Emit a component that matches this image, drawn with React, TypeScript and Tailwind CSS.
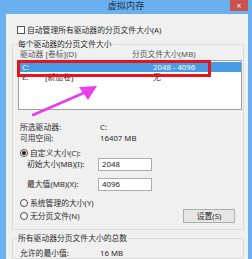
import React from 'react';

const font = { fontFamily: '"Noto Sans", "Noto Sans CJK SC", sans-serif' };

function Radio({ checked }: { checked?: boolean }) {
  return (
    <span className="w-[8px] h-[8px] rounded-full border border-[#4a4a4a] bg-white flex items-center justify-center shrink-0">
      {checked && <span className="w-[4px] h-[4px] rounded-full bg-[#1a1a1a]" />}
    </span>
  );
}

function SizeInput({ value }: { value: string }) {
  return (
    <div className="w-[54px] h-[13px] border border-[#acacac] bg-white pl-[3px] text-[7.8px] leading-[11px] text-[#222]">
      {value}
    </div>
  );
}

export default function App() {
  return (
    <div className="relative w-[252px] h-[259px] overflow-hidden bg-[#6aaff0] flex flex-col text-[#2b2b2b]" style={font}>
      {/* title bar */}
      <div className="h-[17px] relative flex items-center justify-center">
        <span className="text-[9.2px] leading-[12px] text-[#1d3550] -mt-[3px]">虚拟内存</span>
        <div className="absolute right-[4px] top-0 w-[18px] h-[11px] bg-[#c9524c] flex items-center justify-center text-white text-[8px] leading-[8px]">
          ×
        </div>
      </div>

      {/* body */}
      <div className="flex-1 ml-[6px] mr-[4px] bg-[#f0f0f0] flex flex-col pt-[11px]">
        <div className="flex items-center gap-[2px] pl-[11px] h-[10px] text-[7.8px] leading-[10px]">
          <span className="w-[8px] h-[8px] border border-[#555] bg-white shrink-0" />
          <span>自动管理所有驱动器的分页文件大小(A)</span>
        </div>

        <fieldset className="mt-[4px] ml-[6px] mr-[4px] border border-[#dcdcdc] pb-[6px]">
          <legend className="ml-[4px] px-[1px] text-[7.8px] leading-[10px]">每个驱动器的分页文件大小</legend>

          <div className="flex h-[10px] text-[7.8px] leading-[10px] text-[#555]">
            <span className="pl-[7px] w-[119px]">驱动器 [卷标](D)</span>
            <span>分页文件大小(MB)</span>
          </div>

          <div className="ml-[5px] mr-[1px] mt-[1px] h-[50px] border border-[#a0a0a0] bg-white pt-[1px] text-[7.8px] leading-[10px]">
            <div className="flex h-[10px] bg-[#4a9be6] text-white">
              <span className="pl-[3px] w-[26px]">C:</span>
              <span className="w-[108px]"></span>
              <span>2048 - 4096</span>
            </div>
            <div className="flex h-[10px]">
              <span className="pl-[3px] w-[26px]">E:</span>
              <span className="w-[108px]">[新加卷]</span>
              <span>无</span>
            </div>
          </div>

          <div className="mt-[12px] flex flex-col text-[7.8px] leading-[11px]">
            <div className="flex h-[11px] pl-[7px]">
              <span className="w-[80px]">所选驱动器:</span>
              <span>C:</span>
            </div>
            <div className="flex h-[11px] pl-[7px]">
              <span className="w-[80px]">可用空间:</span>
              <span>16407 MB</span>
            </div>

            <div className="flex items-center gap-[2px] h-[10px] pl-[7px] mt-[4px]">
              <Radio checked />
              <span>自定义大小(C):</span>
            </div>
            <div className="flex items-center h-[13px] pl-[14px]">
              <span className="w-[71px]">初始大小(MB)(I):</span>
              <SizeInput value="2048" />
            </div>
            <div className="flex items-center h-[14px] pl-[14px] mt-[6px]">
              <span className="w-[71px]">最大值(MB)(X):</span>
              <SizeInput value="4096" />
            </div>

            <div className="flex items-center gap-[2px] h-[10px] pl-[7px] mt-[7px]">
              <Radio />
              <span>系统管理的大小(Y)</span>
            </div>
            <div className="flex items-center justify-between h-[14px] pl-[7px] pr-[8px] mt-[1px]">
              <div className="flex items-center gap-[2px]">
                <Radio />
                <span>无分页文件(N)</span>
              </div>
              <div className="w-[52px] h-[14px] border border-[#adadad] bg-[#e5e5e5] flex items-center justify-center text-[7.8px]">
                设置(S)
              </div>
            </div>
          </div>
        </fieldset>

        <fieldset className="mt-[3px] ml-[6px] mr-[4px] border border-[#dcdcdc] flex-1">
          <legend className="ml-[4px] px-[1px] text-[7.8px] leading-[10px]">所有驱动器分页文件大小的总数</legend>
          <div className="flex pl-[7px] pt-[5px] text-[7.8px] leading-[10px]">
            <span className="w-[80px]">允许的最小值:</span>
            <span>16 MB</span>
          </div>
        </fieldset>
      </div>

      {/* annotation overlay */}
      <svg className="absolute left-0 top-0 pointer-events-none" width="252" height="259" viewBox="0 0 252 259">
        <rect x="18.5" y="61.5" width="191" height="14" fill="none" stroke="#e8141c" strokeWidth="3" />
        <line x1="33" y1="115" x2="86" y2="92" stroke="#e93ee9" strokeWidth="2.5" strokeLinecap="round" />
        <polygon points="97,86 79,87 88,100" fill="#e93ee9" />
      </svg>
    </div>
  );
}
